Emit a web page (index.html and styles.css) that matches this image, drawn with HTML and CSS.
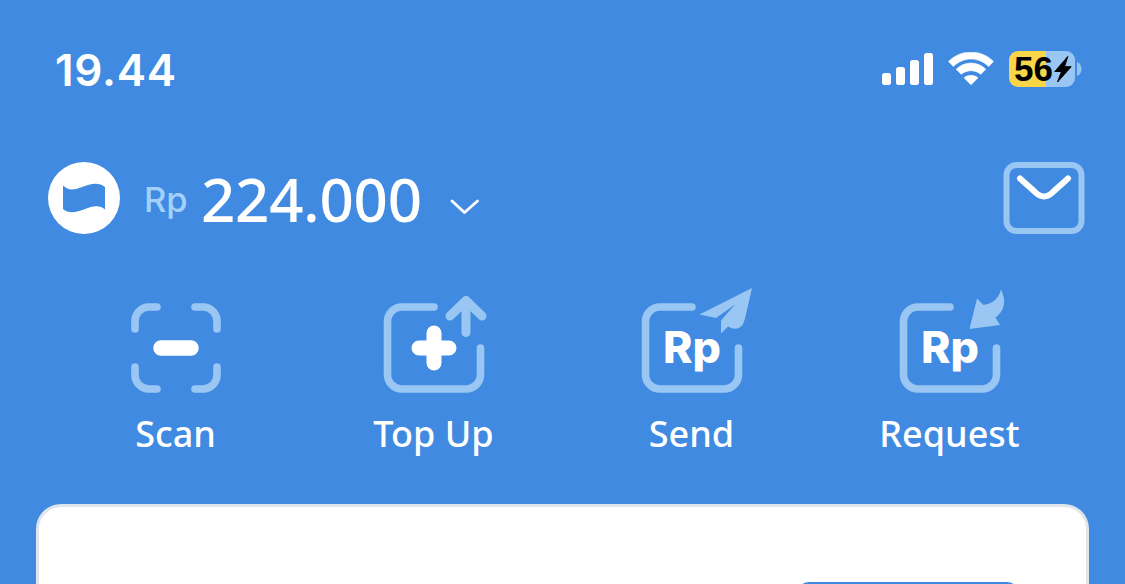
FILE: index.html
```html
<!DOCTYPE html>
<html lang="id">
<head>
<meta charset="utf-8">
<title>Wallet</title>
<link rel="stylesheet" href="styles.css">
</head>
<body>
<main class="screen">
  <header class="status">
    <span class="time">19.44</span>
    <div class="indicators">
      <svg class="signal" width="52" height="34" viewBox="882 52 52 34" fill="#fff">
        <rect x="882" y="73" width="9" height="12" rx="2.8"/>
        <rect x="896" y="67" width="9" height="18" rx="2.8"/>
        <rect x="910" y="60" width="9" height="25" rx="2.8"/>
        <rect x="924" y="53" width="9" height="32" rx="2.8"/>
      </svg>
      <svg class="wifi" width="46" height="34" viewBox="948 52 46 34" fill="#fff">
        <path d="M948.5 61.5C960.5 49 981.500 49 993.500 61.500L988.700 66.500C978.500 56.500 963.500 56.500 953.300 66.500Z" stroke="#fff" stroke-width=".6" stroke-linejoin="round"/>
        <path d="M956.200 69.300C964.500 61 977.500 61 985.800 69.300L980.800 74.300C975 69.500 967 69.500 961.200 74.300Z" stroke="#fff" stroke-width=".6" stroke-linejoin="round"/>
        <path d="M964.200 77.800C968 74.600 974 74.600 977.800 77.800L971 84.700Z" stroke="#fff" stroke-width=".8" stroke-linejoin="round"/>
      </svg>
      <div class="battery">
        <span class="level">56</span>
        <svg width="18" height="28" viewBox="1054 55 18 28"><path d="M1067.800 56.500L1054.800 71.500H1061.500L1057.500 82L1071.200 66.700H1064.500Z" fill="#000" stroke="#000" stroke-width="1" stroke-linejoin="round"/></svg>
      </div>
      <svg class="nub" width="5" height="14" viewBox="0 0 5 14"><path d="M0 0C6 2 6 12 0 14Z" fill="#95c3f2"/></svg>
    </div>
  </header>

  <section class="balance">
    <svg class="logo" width="72" height="72" viewBox="48 162 72 72">
      <circle cx="84" cy="198" r="36" fill="#fff"/>
      <path d="M63 185.500C68 190.300 73 190.200 80 187.800C89 184.300 98 181 105 187V209.500C99 204 91 206.800 83 209.800C75 212.800 68 213.500 63 209Z" fill="#408be1"/>
    </svg>
    <span class="currency">Rp</span>
    <span class="amount">224.000</span>
    <svg class="chevron" width="32" height="20" viewBox="449 196 32 20"><path d="M452 201L464.500 212.500L477.500 201" fill="none" stroke="#fff" stroke-width="2.800" stroke-linecap="round" stroke-linejoin="round"/></svg>
    <svg class="mail" width="82" height="72" viewBox="1003 162 82 72" fill="none" stroke-width="6">
      <rect x="1006.500" y="165" width="75" height="66" rx="10" stroke="#99c6f2"/>
      <path d="M1020 178.500L1034.500 191.500Q1044 201.500 1053.500 191.500L1068 178.500" stroke="#fff" stroke-linecap="round"/>
    </svg>
  </section>

  <nav class="actions">
    <a class="action">
      <svg width="258" height="120" viewBox="46 280 258 120" fill="none" stroke="#99c6f2" stroke-width="7.600" stroke-linecap="round">
        <path d="M157 307H149A14 14 0 0 0 135 321V329M195 307H203A14 14 0 0 1 217 321V329M157 389H149A14 14 0 0 1 135 375V367M195 389H203A14 14 0 0 0 217 375V367"/>
        <path d="M161 348H191" stroke="#fff" stroke-width="15.500"/>
      </svg>
      <span class="label">Scan</span>
    </a>
    <a class="action">
      <svg width="258" height="120" viewBox="304 280 258 120" fill="none" stroke="#99c6f2" stroke-width="7.600" stroke-linecap="round" stroke-linejoin="round">
        <path d="M434 307H402A14.500 14.500 0 0 0 387.500 321.500V374.500A14.500 14.500 0 0 0 402 389H466A14.500 14.500 0 0 0 480.500 374.500V348"/>
        <path d="M450 316L466 300.500L482 316M466 301V332.500" stroke-width="9"/>
        <path d="M419 348H449M434 333V363" stroke="#fff" stroke-width="15"/>
      </svg>
      <span class="label">Top Up</span>
    </a>
    <a class="action">
      <svg width="258" height="120" viewBox="562 280 258 120">
        <path d="M692 307H660A14.500 14.500 0 0 0 645.500 321.500V374.500A14.500 14.500 0 0 0 660 389H724A14.500 14.500 0 0 0 738.500 374.500V348" fill="none" stroke="#99c6f2" stroke-width="7.600" stroke-linecap="round"/>
        <path d="M752 288L699.500 314.500L716 318L735 304.500L721 320.500V333.500L728 326.500Q737 331.500 742.500 325Q745 320 746 314Z" fill="#99c6f2"/>
        <text class="rupiah" x="663" y="363" textLength="58" lengthAdjust="spacingAndGlyphs">Rp</text>
      </svg>
      <span class="label">Send</span>
    </a>
    <a class="action">
      <svg width="258" height="120" viewBox="820 280 258 120">
        <path d="M950 307H918A14.500 14.500 0 0 0 903.500 321.500V374.500A14.500 14.500 0 0 0 918 389H982A14.500 14.500 0 0 0 996.500 374.500V348" fill="none" stroke="#99c6f2" stroke-width="7.600" stroke-linecap="round"/>
        <path d="M1001 289.500C1007 302 1004 311 995.500 317.500L1000 325L969.500 329L977 298.500L983.500 305C993 303.500 999 298 1001 289.500Z" fill="#99c6f2"/>
        <text class="rupiah" x="921" y="363" textLength="58" lengthAdjust="spacingAndGlyphs">Rp</text>
      </svg>
      <span class="label">Request</span>
    </a>
  </nav>

  <section class="card"><div class="card-button"></div></section>
</main>
</body>
</html>
```
FILE: styles.css
```css
* { box-sizing: border-box; }
body { margin: 0; }
svg { display: block; flex: none; }
.screen {
  width: 1125px;
  height: 584px;
  overflow: hidden;
  background: #408be1;
  color: #fff;
  font-family: "Noto Sans", sans-serif;
  display: flex;
  flex-direction: column;
}
.status {
  height: 162px;
  flex: none;
  padding: 40px 43px 0 55px;
  display: flex;
  align-items: flex-start;
  justify-content: space-between;
}
.time {
  font: 560 44px/60px Inter, sans-serif;
  letter-spacing: 0.7px;
}
.indicators { display: flex; align-items: center; height: 58px; }
.wifi { margin-left: 14px; }
.battery {
  width: 66px;
  height: 36px;
  margin-left: 15px;
  padding-left: 5px;
  border-radius: 9px;
  background: linear-gradient(90deg, #f9d548 37px, #99c6f2 37px);
  display: flex;
  align-items: center;
}
.level {
  width: 40px;
  color: #000;
  font: 700 35px/36px "Liberation Sans", sans-serif;
}
.nub { margin-left: 2px; }
.balance {
  height: 72px;
  flex: none;
  padding: 0 40px 0 48px;
  display: flex;
  align-items: center;
}
.currency {
  width: 57px;
  margin-left: 24px;
  color: #a3d1fc;
  font: 450 34.5px/48px Inter, sans-serif;
  padding-top: 3px;
}
.amount {
  width: 222px;
  font-size: 60px;
  line-height: 72px;
  font-weight: 500;
  letter-spacing: -0.2px;
  padding-top: 1px;
}
.chevron { margin: 16px auto 0 26px; }
.actions {
  height: 270px;
  flex: none;
  padding: 46px 47px 0 46px;
  display: flex;
}
.action {
  width: 258px;
  display: flex;
  flex-direction: column;
  align-items: center;
}
.label {
  margin-top: 9px;
  padding-left: 1px;
  font-size: 36px;
  line-height: 50px;
  font-weight: 500;
}
.rupiah {
  fill: #fff;
  font: 800 43.5px Inter, sans-serif;
}
.card {
  width: 1053px;
  height: 180px;
  flex: none;
  margin-left: 36px;
  padding: 75px 67px 0 0;
  border: 3px solid #e0e5eb;
  border-radius: 25px;
  background: #fff;
  display: flex;
  justify-content: flex-end;
}
.card-button {
  width: 222px;
  height: 60px;
  border-radius: 12px;
  background: #408be1;
}
```
